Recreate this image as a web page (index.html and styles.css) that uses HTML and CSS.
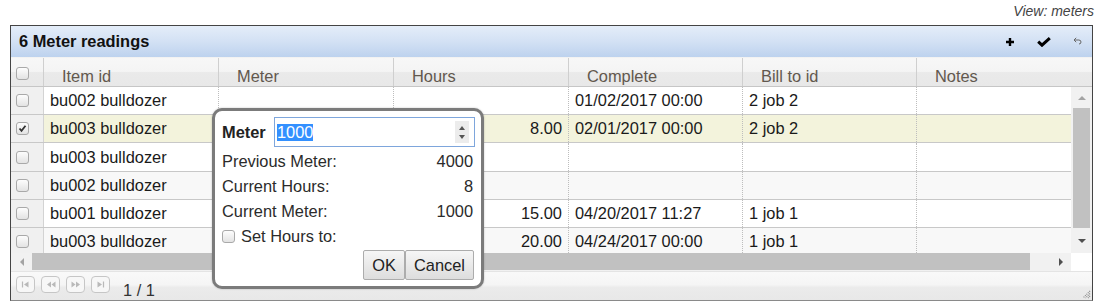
FILE: index.html
```html
<!DOCTYPE html>
<html>
<head>
<meta charset="utf-8">
<link rel="stylesheet" href="styles.css">
</head>
<body>
<div class="viewbar">View: meters</div>
<div class="grid">
  <div class="titlebar">
    <span class="title">6 Meter readings</span>
    <div class="tools">
      <svg class="ic-plus" width="8" height="8" viewBox="0 0 8 8"><path d="M4 0V8M0 4H8" stroke="#000" stroke-width="2.4"/></svg>
      <svg class="ic-check" width="14" height="10" viewBox="0 0 14 10"><path d="M1.2 4.6 L5 8.2 L12.8 1.2" fill="none" stroke="#000" stroke-width="3"/></svg>
      <svg class="ic-undo" width="9" height="8" viewBox="0 0 9 8"><path d="M3.2 0.8 L1 3 L3.2 5.2 M1 3 H5.8 Q8 3 8 5 Q8 7 6 7" fill="none" stroke="#666" stroke-width="1"/></svg>
    </div>
  </div>

  <div class="hdr">
    <div class="hc hchk"><span class="cb"></span></div>
    <div class="hc w175">Item id</div>
    <div class="hc w175">Meter</div>
    <div class="hc w175">Hours</div>
    <div class="hc w174">Complete</div>
    <div class="hc w174">Bill to id</div>
    <div class="hc hnotes">Notes</div>
  </div>

  <div class="bodyarea">
    <div class="rows">
      <div class="row">
        <div class="chk"><span class="cb"></span></div>
        <div class="c w175">bu002 bulldozer</div>
        <div class="c w175"></div>
        <div class="c w175 num"></div>
        <div class="c w174">01/02/2017 00:00</div>
        <div class="c w174">2 job 2</div>
        <div class="c notes"></div>
      </div>
      <div class="row sel">
        <div class="chk"><span class="cb"><svg width="11" height="11" viewBox="0 0 11 11"><path d="M2.5 5.5 L4.5 7.8 L8.5 2.8" fill="none" stroke="#333" stroke-width="1.8"/></svg></span></div>
        <div class="c w175">bu003 bulldozer</div>
        <div class="c w175"></div>
        <div class="c w175 num">8.00</div>
        <div class="c w174">02/01/2017 00:00</div>
        <div class="c w174">2 job 2</div>
        <div class="c notes"></div>
      </div>
      <div class="row tall">
        <div class="chk"><span class="cb"></span></div>
        <div class="c w175">bu003 bulldozer</div>
        <div class="c w175"></div>
        <div class="c w175 num"></div>
        <div class="c w174"></div>
        <div class="c w174"></div>
        <div class="c notes"></div>
      </div>
      <div class="row alt">
        <div class="chk"><span class="cb"></span></div>
        <div class="c w175">bu002 bulldozer</div>
        <div class="c w175"></div>
        <div class="c w175 num"></div>
        <div class="c w174"></div>
        <div class="c w174"></div>
        <div class="c notes"></div>
      </div>
      <div class="row">
        <div class="chk"><span class="cb"></span></div>
        <div class="c w175">bu001 bulldozer</div>
        <div class="c w175"></div>
        <div class="c w175 num">15.00</div>
        <div class="c w174">04/20/2017 11:27</div>
        <div class="c w174">1 job 1</div>
        <div class="c notes"></div>
      </div>
      <div class="row alt">
        <div class="chk"><span class="cb"></span></div>
        <div class="c w175">bu003 bulldozer</div>
        <div class="c w175"></div>
        <div class="c w175 num">20.00</div>
        <div class="c w174">04/24/2017 00:00</div>
        <div class="c w174">1 job 1</div>
        <div class="c notes"></div>
      </div>
    </div>
    <div class="vscroll">
      <div class="vs-up"><span class="tri-up"></span></div>
      <div class="vs-thumb"></div>
      <div class="vs-down"><span class="tri-down"></span></div>
    </div>
  </div>

  <div class="hscroll">
    <div class="hs-left"><span class="tri-left"></span></div>
    <div class="hs-thumb"></div>
    <div class="hs-track"></div>
    <div class="hs-right"><span class="tri-right"></span></div>
    <div class="hs-corner"></div>
  </div>

  <div class="footer">
    <span class="pbtn"><svg width="9" height="7" viewBox="0 0 9 7"><path d="M1.5 0.5V6.5" stroke="#b9b9b9" stroke-width="1.2"/><path d="M7.5 0.5 L3 3.5 L7.5 6.5Z" fill="#b9b9b9"/></svg></span>
    <span class="pbtn"><svg width="10" height="7" viewBox="0 0 10 7"><path d="M5 0.5 L1 3.5 L5 6.5Z M9.5 0.5 L5.5 3.5 L9.5 6.5Z" fill="#b9b9b9"/></svg></span>
    <span class="pbtn"><svg width="10" height="7" viewBox="0 0 10 7"><path d="M0.5 0.5 L4.5 3.5 L0.5 6.5Z M5 0.5 L9 3.5 L5 6.5Z" fill="#b9b9b9"/></svg></span>
    <span class="pbtn"><svg width="9" height="7" viewBox="0 0 9 7"><path d="M1.5 0.5 L6 3.5 L1.5 6.5Z" fill="#b9b9b9"/><path d="M7.5 0.5V6.5" stroke="#b9b9b9" stroke-width="1.2"/></svg></span>
    <span class="pager">1 / 1</span>
    <svg class="grip" width="10" height="10" viewBox="0 0 10 10"><path d="M9 2 L2 9 M9 4.5 L4.5 9 M9 7 L7 9" stroke="#8a8a8a" stroke-width="1.2" stroke-dasharray="1 1"/></svg>
  </div>

  <div class="dlg">
    <div class="dlg-top">
      <span class="dlg-lbl">Meter</span>
      <div class="inp">
        <span class="seltext">1000</span>
        <div class="spin"><span class="sp-up"></span><span class="sp-down"></span></div>
      </div>
    </div>
    <div class="drows">
      <div class="drow"><span>Previous Meter:</span><span>4000</span></div>
      <div class="drow"><span>Current Hours:</span><span>8</span></div>
      <div class="drow"><span>Current Meter:</span><span>1000</span></div>
      <div class="drow dcbrow"><span class="cb"></span><span>Set Hours to:</span></div>
    </div>
    <div class="dbtns">
      <button class="btn ok">OK</button><button class="btn cancel">Cancel</button>
    </div>
  </div>
</div>
</body>
</html>
```

FILE: styles.css
```css
* { box-sizing: border-box; }

body {
  margin: 0;
  width: 1101px;
  height: 306px;
  overflow: hidden;
  background: #fff;
  font-family: "Liberation Sans", Arial, sans-serif;
  font-size: 16.4px;
  color: #1a1a1a;
}

.viewbar {
  height: 25px;
  padding-right: 7px;
  text-align: right;
  font-style: italic;
  font-size: 14px;
  line-height: 22px;
  color: #444;
}

.grid {
  position: relative;
  margin-left: 10px;
  width: 1083px;
  height: 276px;
  border: 1px solid #444;
  border-bottom-color: #8a8a8a;
  display: flex;
  flex-direction: column;
}

/* title bar */
.titlebar {
  flex: none;
  height: 32px;
  display: flex;
  align-items: center;
  padding: 0 10px 0 8px;
  background: linear-gradient(#e4edf9, #d3e1f4 50%, #bdd2ee);
  border-bottom: 1px solid #f2f2f2;
}
.title {
  flex: 1;
  font-weight: bold;
  color: #111;
}
.tools {
  display: flex;
  align-items: center;
}
.ic-check { margin-left: 23px; }
.ic-undo { margin-left: 22px; margin-top: -2px; }

/* header */
.hdr {
  flex: none;
  height: 29px;
  display: flex;
  background: linear-gradient(#f7f7f7 0, #f4f4f4 48%, #eaeaea 52%, #e8e8e8 100%);
  border-bottom: 1px solid #c6c6c6;
}
.hc {
  display: flex;
  align-items: center;
  padding: 8px 0 0 18px;
  border-right: 1px solid #cfcfcf;
  color: #62584e;
  white-space: nowrap;
}
.hc.hchk {
  width: 33px;
  padding: 3px 0 0 5px;
}
.hc.hnotes {
  flex: 1;
  border-right: none;
}
.w175 { width: 175px; }
.w174 { width: 174px; }

/* body rows */
.bodyarea {
  flex: none;
  height: 166px;
  display: flex;
}
.rows {
  width: 1060px;
  overflow: hidden;
}
.row {
  height: 28px;
  display: flex;
  background: #fff;
  border-bottom: 1px solid #c8c8c8;
}
.row.tall { height: 29px; }
.row.alt { background: #f8f8f8; }
.row.sel { background: #f3f3dc; }

.chk {
  width: 33px;
  display: flex;
  align-items: center;
  padding-left: 5px;
  background: #f0f0f0;
  border-right: 1px solid #d3d3d3;
}
.c {
  display: flex;
  align-items: center;
  padding: 0 6px;
  white-space: nowrap;
  overflow: hidden;
  border-right: 1px dotted #bdbdbd;
}
.c.num { justify-content: flex-end; }
.c.notes { flex: 1; border-right: none; }

.cb {
  display: inline-flex;
  align-items: center;
  justify-content: center;
  width: 13px;
  height: 13px;
  flex: none;
  border: 1px solid #a9a9a9;
  border-radius: 3px;
  background: linear-gradient(#fdfdfd, #e3e3e3);
}

/* vertical scrollbar */
.vscroll {
  width: 21px;
  display: flex;
  flex-direction: column;
  background: #f1f1f1;
}
.vs-up {
  height: 21px;
  display: flex;
  align-items: center;
  justify-content: center;
}
.vs-thumb {
  height: 120px;
  width: 17px;
  margin-left: 2px;
  background: #c1c1c1;
}
.vs-down {
  flex: 1;
  display: flex;
  align-items: center;
  justify-content: center;
}
.tri-up {
  width: 0; height: 0;
  border-left: 4px solid transparent;
  border-right: 4px solid transparent;
  border-bottom: 4px solid #a3a3a3;
}
.tri-down {
  width: 0; height: 0;
  border-left: 4px solid transparent;
  border-right: 4px solid transparent;
  border-top: 4px solid #505050;
}

/* horizontal scrollbar */
.hscroll {
  flex: none;
  height: 18px;
  display: flex;
  background: #f1f1f1;
}
.hs-left, .hs-right {
  width: 21px;
  display: flex;
  align-items: center;
  justify-content: center;
}
.hs-thumb {
  width: 998px;
  height: 17px;
  background: #c1c1c1;
}
.hs-track { flex: 1; }
.hs-corner { width: 21px; background: #fff; }
.tri-left {
  width: 0; height: 0;
  border-top: 4px solid transparent;
  border-bottom: 4px solid transparent;
  border-right: 4px solid #a3a3a3;
}
.tri-right {
  width: 0; height: 0;
  border-top: 4px solid transparent;
  border-bottom: 4px solid transparent;
  border-left: 4px solid #505050;
}

/* footer */
.footer {
  flex: 1;
  position: relative;
  display: flex;
  align-items: flex-start;
  padding: 4px 0 0 5px;
  background: linear-gradient(#f9f9f9, #f5f5f5 45%, #ebebeb 55%, #e8e8e8);
  border-top: 1px solid #e4e4e4;
}
.pbtn {
  width: 19px;
  height: 17px;
  margin-right: 6px;
  display: flex;
  align-items: center;
  justify-content: center;
  border: 1px solid #c6c6c6;
  border-radius: 4px;
  background: #f7f7f7;
}
.pager {
  margin: 5px 0 0 7px;
  line-height: 18px;
  color: #333;
}
.grip {
  position: absolute;
  right: 1px;
  bottom: 1px;
}

/* dialog */
.dlg {
  position: absolute;
  left: 201px;
  top: 82px;
  width: 272px;
  height: 181px;
  padding: 6px 6px 6px 7px;
  background: #fff;
  border: 3px solid #7b7b7b;
  border-radius: 10px;
  box-shadow: 0 0 2px rgba(0, 0, 0, 0.25);
  color: #2b2b2b;
}
.dlg-top {
  display: flex;
  align-items: center;
  height: 30px;
}
.dlg-lbl {
  width: 52px;
  font-weight: bold;
  color: #222;
}
.inp {
  position: relative;
  width: 201px;
  height: 30px;
  display: flex;
  align-items: center;
  padding-left: 2px;
  border: 1px solid #7ea6dc;
}
.seltext {
  background: #3390ff;
  color: #fff;
  line-height: 17px;
}
.spin {
  position: absolute;
  right: 5px;
  top: 3px;
  width: 14px;
  height: 22px;
  background: #ececec;
  display: flex;
  flex-direction: column;
  align-items: center;
  justify-content: center;
  gap: 5px;
}
.sp-up {
  width: 0; height: 0;
  border-left: 3.5px solid transparent;
  border-right: 3.5px solid transparent;
  border-bottom: 4px solid #555;
}
.sp-down {
  width: 0; height: 0;
  border-left: 3.5px solid transparent;
  border-right: 3.5px solid transparent;
  border-top: 4px solid #555;
}
.drows { margin-top: 2px; }
.drow {
  display: flex;
  justify-content: space-between;
  align-items: center;
  height: 25px;
  padding-right: 2px;
}
.drow.dcbrow {
  justify-content: flex-start;
}
.dcbrow .cb { margin-right: 6px; }
.dbtns {
  display: flex;
  justify-content: flex-end;
  margin-top: 1px;
  padding-right: 1px;
}
.btn {
  height: 30px;
  padding: 0;
  border: 1px solid #acacac;
  border-radius: 2px;
  background: linear-gradient(#f6f6f6, #dddddd);
  font-family: inherit;
  font-size: 16.4px;
  color: #222;
}
.btn.ok { width: 42px; }
.btn.cancel { width: 69px; }
```
